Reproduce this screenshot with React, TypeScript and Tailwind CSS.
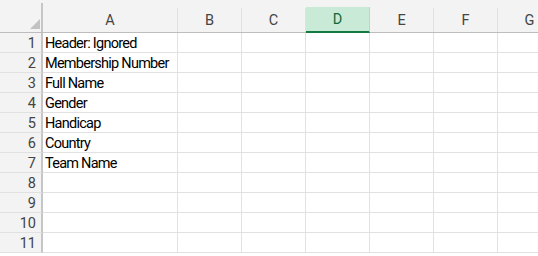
import React from "react";

const columns = [
  { name: "A", w: "w-[135px]" },
  { name: "B", w: "w-[64px]" },
  { name: "C", w: "w-[64px]" },
  { name: "D", w: "w-[64px]" },
  { name: "E", w: "w-[64px]" },
  { name: "F", w: "w-[64px]" },
  { name: "G", w: "w-[64px]" },
];

const values = [
  "Header: Ignored",
  "Membership Number",
  "Full Name",
  "Gender",
  "Handicap",
  "Country",
  "Team Name",
  "",
  "",
  "",
  "",
];

const App: React.FC = () => {
  return (
    <div className="w-[538px] h-[256px] overflow-hidden bg-white text-[14.5px] font-['Roboto','Liberation_Sans',sans-serif] select-none">
      {/* column headers */}
      <div className="flex h-[33px] bg-[#f3f3f3] border-b border-[#bdbdbd]">
        <div className="relative w-[43px] shrink-0">
          <div className="absolute right-0 top-[3px] bottom-0 w-[2px] bg-[#c6c6c6]" />
          <svg className="absolute left-[30px] top-[19px]" width="10" height="10" viewBox="0 0 10 10">
            <polygon points="10,0 10,10 0,10" fill="#c2c2c2" />
          </svg>
        </div>
        {columns.map((c) => (
          <div key={c.name} className={`${c.w} shrink-0 flex flex-col`}>
            <div className="h-[14px]" />
            <div
              className={
                c.name === "D"
                  ? "flex-1 flex items-center justify-center pt-[2px] bg-[#c9ead6] text-[#0e6b35] border-b-2 border-[#137a3f] border-r border-r-[#b5d9c2] -mb-px"
                  : "flex-1 flex items-center justify-center pt-[2px] text-[#444] border-r border-[#e1e1e1]"
              }
            >
              {c.name}
            </div>
          </div>
        ))}
      </div>
      {/* rows */}
      {values.map((v, i) => (
        <div key={i} className="flex h-[20px]">
          <div className="w-[43px] shrink-0 flex items-center justify-end pt-[2px] pr-[5px] bg-[#f3f3f3] text-[#444] border-r-2 border-[#c6c6c6] border-b border-b-[#e1e1e1]">
            {i + 1}
          </div>
          {columns.map((c) => (
            <div
              key={c.name}
              className={`${c.w} shrink-0 border-r border-b border-[#e1e1e1] flex items-center pt-[2px] pl-[2px] text-black whitespace-nowrap tracking-[-0.75px]`}
            >
              {c.name === "A" ? v : ""}
            </div>
          ))}
        </div>
      ))}
    </div>
  );
};

export default App;
